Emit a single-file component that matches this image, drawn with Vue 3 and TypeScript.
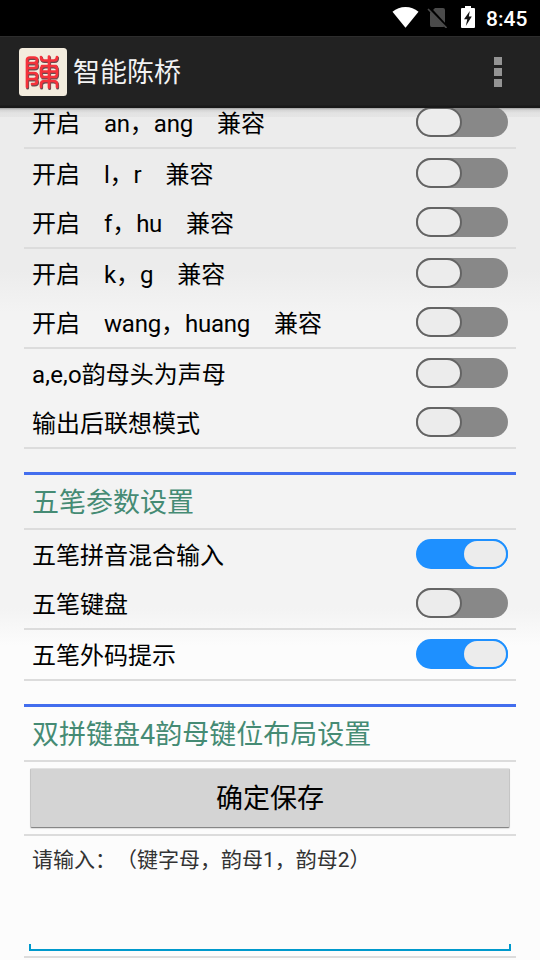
<script setup lang="ts">
import { ref } from 'vue'

interface Option {
  label: string
  on: boolean
}

const fuzzyGroups = ref<Option[][]>([
  [{ label: '开启　an，ang　兼容', on: false }],
  [
    { label: '开启　l，r　兼容', on: false },
    { label: '开启　f，hu　兼容', on: false },
  ],
  [
    { label: '开启　k，g　兼容', on: false },
    { label: '开启　wang，huang　兼容', on: false },
  ],
  [
    { label: 'a,e,o韵母头为声母', on: false },
    { label: '输出后联想模式', on: false },
  ],
])

const wubiGroups = ref<Option[][]>([
  [
    { label: '五笔拼音混合输入', on: true },
    { label: '五笔键盘', on: false },
  ],
  [{ label: '五笔外码提示', on: true }],
])

// Latin runs are tracked separately from the full-width characters around them.
function runs(label: string): string[] {
  return label.split(/([a-z,]+)/).filter((part) => part.length > 0)
}

function runClass(part: string): string {
  if (!/^[a-z,]+$/.test(part)) return ''
  return part.includes(',') ? 'loose' : 'tight'
}
</script>

<template>
  <div class="screen">
    <div class="status">
      <svg class="wifi" width="28" height="22" viewBox="0 0 28 22">
        <path d="M14.500 21.800L1.500 5.800Q7 1 14.500 1T27.500 5.800Z" fill="#fff" />
      </svg>
      <svg class="sim" width="20" height="22" viewBox="0 0 20 22">
        <path d="M8 2H16Q18 2 18 4V19Q18 21 16 21H4.500Q3 21 3 19V7Z" fill="#4b4b4b" />
        <path d="M2.500 2L20.500 21.500" stroke="#000" stroke-width="2.600" />
        <path d="M1 3L19.500 22" stroke="#4b4b4b" stroke-width="1.600" />
      </svg>
      <svg class="battery" width="14" height="22" viewBox="0 0 14 22">
        <path d="M4 2V0H10V2H13Q14 2 14 3V21Q14 22 13 22H1Q0 22 0 21V3Q0 2 1 2Z" fill="#fff" />
        <path d="M8.800 5L3 13.200H6.300L4.800 20L10.800 10.500H7.800Z" fill="#111" />
      </svg>
      <span class="time">8:45</span>
    </div>

    <header class="bar">
      <svg class="logo" width="48" height="48" viewBox="0 0 48 48">
        <rect width="48" height="48" rx="3.500" fill="#f3ecde" />
        <g fill="none" stroke-linecap="round" stroke-linejoin="round">
          <g v-for="layer in 2" :key="layer" :class="layer === 1 ? 'seal-shade' : 'seal-ink'">
            <path d="M8 39V12Q8 9.500 11 9.500H15Q18 9.500 18 12Q18 15 15 15H9M9 20H15Q18 20 18 17.500T15 15M8 25H15Q18 25 18 28T15 31H9M15 31Q18 31 18 33.500T15 36H13" />
            <path d="M30 8.500V39.500M22 9Q22 12.500 25 12.500H35Q38 12.500 38 9M23 18H37M23 23.500H37M23 29H37M26 18Q22 18 22 21V26Q22 29 25 29M34 18Q38 18 38 21V26Q38 29 35 29M22 39V36Q22 33 26 33H34Q38 33 38 36V39" />
          </g>
        </g>
      </svg>
      <h1 class="title">智能陈桥</h1>
      <div class="more"><i></i><i></i><i></i></div>
    </header>

    <main class="content">
      <div class="list">
        <div v-for="(group, g) in fuzzyGroups" :key="'f' + g" class="group">
          <div v-for="item in group" :key="item.label" class="row">
            <div class="label"><span v-for="(part, p) in runs(item.label)" :key="p" :class="runClass(part)">{{ part }}</span></div>
            <button class="switch" :class="{ on: item.on }" @click="item.on = !item.on"><i></i></button>
          </div>
        </div>

        <h2 class="section">五笔参数设置</h2>
        <div v-for="(group, g) in wubiGroups" :key="'w' + g" class="group">
          <div v-for="item in group" :key="item.label" class="row">
            <div class="label">{{ item.label }}</div>
            <button class="switch" :class="{ on: item.on }" @click="item.on = !item.on"><i></i></button>
          </div>
        </div>

        <h2 class="section">双拼键盘4韵母键位布局设置</h2>
        <div class="save-wrap">
          <button class="save">确定保存</button>
        </div>
        <div class="field-wrap">
          <div class="hint">请输入：（键字母，韵母1，韵母2）</div>
          <div class="underline"></div>
        </div>
      </div>
    </main>
  </div>
</template>

<style>
body {
  margin: 0;
  overflow: hidden;
}
</style>

<style scoped>
.screen {
  width: 540px;
  height: 960px;
  display: flex;
  flex-direction: column;
  overflow: hidden;
  font-family: Roboto, "Noto Sans CJK SC", sans-serif;
  text-spacing-trim: space-all;
  color: #000;
  background: linear-gradient(#ececec 270px, #f3f3f3 312px, #f3f3f3 608px, #fcfcfc 646px);
}
.status {
  flex: none;
  height: 36px;
  box-sizing: border-box;
  padding: 6px 12px 0 391px;
  display: flex;
  align-items: flex-start;
  background: #000;
}
.sim { margin-left: 8px; }
.battery { margin-left: 14px; }
.time {
  margin-left: 11px;
  font-size: 21px;
  font-weight: 500;
  line-height: 26px;
  color: #fff;
}
.bar {
  flex: none;
  height: 72px;
  box-sizing: border-box;
  padding: 0 38px 0 19px;
  display: flex;
  align-items: center;
  background: linear-gradient(#2d2d2d 1px, #222 1px, #222 69px, #191919 70px, #191919 72px);
}
.seal-shade {
  stroke: #6b4a4e;
  stroke-width: 3px;
  transform: translate(0.6px, 0.9px);
}
.seal-ink {
  stroke: #f5323b;
  stroke-width: 2.7px;
}
.title {
  margin: 2px 0 0 6px;
  font-size: 27px;
  font-weight: 400;
  line-height: 40px;
  color: #f3f3f3;
}
.more {
  margin-left: auto;
  display: grid;
  gap: 3px;
}
.more i {
  width: 8px;
  height: 8px;
  background: #949494;
}
.content {
  flex: 1;
  overflow: hidden;
  background: linear-gradient(rgba(0, 0, 0, .32), rgba(0, 0, 0, .1) 2px, rgba(0, 0, 0, .04) 5px, rgba(0, 0, 0, .03) 9px, transparent 9px);
}
.list {
  margin: -10px 24px 0;
}
.group {
  border-bottom: 2px solid #dcdcdc;
}
.row {
  height: 49px;
  box-sizing: border-box;
  padding: 0 8px;
  display: flex;
  align-items: center;
  justify-content: space-between;
  font-size: 24px;
  white-space: pre;
}
.label {
  line-height: 36px;
  margin-top: 2px;
}
.tight {
  letter-spacing: -0.23px;
}
.loose {
  letter-spacing: 0.18px;
}
.switch {
  width: 92px;
  height: 30px;
  margin: 0 0 1px;
  padding: 0;
  border: 0;
  border-radius: 15px;
  display: flex;
  background: #888;
}
.switch i {
  box-sizing: border-box;
  width: 46px;
  height: 30px;
  border: 2px solid #646464;
  border-radius: 15px;
  background: #ececec;
}
.switch.on {
  background: #1e90ff;
  justify-content: flex-end;
}
.switch.on i {
  border-color: #1e90ff;
}
.section {
  height: 58px;
  box-sizing: border-box;
  margin: 23px 0 0;
  padding-left: 8px;
  border-top: 3px solid #436eee;
  border-bottom: 2px solid #dcdcdc;
  font-size: 27px;
  font-weight: 400;
  line-height: 57px;
  color: #458b74;
}
.save-wrap {
  height: 74px;
  box-sizing: border-box;
  padding: 6px 6px 0;
  border-bottom: 2px solid #dcdcdc;
}
.save {
  display: block;
  width: 100%;
  height: 60px;
  padding: 2px 0 0;
  border: 1px solid #c5c5c5;
  border-top-color: #e2e2e2;
  border-bottom-color: #868686;
  border-radius: 2px;
  box-shadow: 0 1px 1px rgba(0, 0, 0, .12);
  background: #d4d4d4;
  color: #000;
  font: 400 27px/56px Roboto, "Noto Sans CJK SC", sans-serif;
}
.field-wrap {
  height: 122px;
  box-sizing: border-box;
  padding: 9px 5px 5px;
  border-bottom: 2px solid #dcdcdc;
  display: flex;
  flex-direction: column;
  justify-content: space-between;
}
.hint {
  padding-left: 3px;
  font-size: 21px;
  line-height: 31px;
  color: #333;
}
.underline {
  height: 7px;
  box-sizing: border-box;
  border: 2px solid #0099cc;
  border-top: 0;
}
</style>
